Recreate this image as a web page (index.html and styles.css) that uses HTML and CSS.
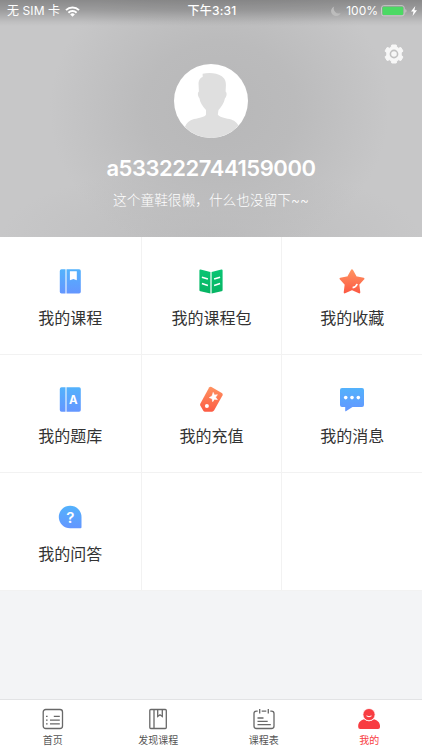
FILE: index.html
```html
<!DOCTYPE html>
<html lang="zh-CN">
<head>
    <meta charset="UTF-8">
    <meta name="viewport" content="width=device-width, initial-scale=1.0">
    <title>我的</title>
    <link rel="stylesheet" href="styles.css">
</head>
<body>
    <header class="profile">
        <div class="status-bar">
            <div class="status-left">
                <span>无 SIM 卡</span>
                <svg class="wifi" width="15" height="11" viewBox="0 0 15 11" fill="none" stroke="#fff" stroke-width="2">
                    <path d="M1 4.1a9.3 9.3 0 0 1 13 0M3.4 6.7a5.9 5.9 0 0 1 8.2 0"/>
                    <path d="M7.5 10.7L5.2 8.4a3.3 3.3 0 0 1 4.6 0z" fill="#fff" stroke="none"/>
                </svg>
            </div>
            <div class="status-time">下午3:31</div>
            <div class="status-right">
                <svg class="moon" width="10" height="10" viewBox="0 0 10 10">
                    <path d="M3.2 0.4A5 5 0 1 0 9.7 6.9 4.9 4.9 0 0 1 3.2 0.4z" fill="#bcbcbc"/>
                </svg>
                <span>100%</span>
                <svg class="battery" width="26" height="12" viewBox="0 0 26 12">
                    <rect x="0.5" y="0.7" width="22.7" height="10.2" rx="2.2" fill="none" stroke="#c9c9c9"/>
                    <rect x="1.5" y="1.7" width="20.7" height="8.2" rx="1.2" fill="#4cd964"/>
                    <path d="M24.3 4.1v3.6q1.2-.5 1.2-1.8t-1.2-1.8z" fill="#c9c9c9"/>
                </svg>
                <svg class="bolt" width="6" height="10" viewBox="0 0 6 10">
                    <path d="M4.3 0L0 5.5h2.5L1.6 10 6 4.2H3.4z" fill="#fff"/>
                </svg>
            </div>
        </div>
        <a class="settings" href="#">
            <svg width="20" height="20" viewBox="0 0 20 20">
                <path d="M7.8 1h4.4l.7 2.300 1.500.9 2.500-.7 2.100 3.600-1.800 1.800v2.200l1.800 1.800-2.100 3.600-2.500-.7-1.500.9-.7 2.300H7.800l-.7-2.300-1.500-.9-2.500.7L1 12.900l1.800-1.800V8.900L1 7.100l2.100-3.600 2.500.7 1.500-.9z" fill="#f7f7f7" stroke="#f7f7f7" stroke-linejoin="round"/>
                <circle cx="10" cy="10" r="3.6" fill="#f7f7f7" stroke="#c2c2c2" stroke-width="1.6"/>
            </svg>
        </a>
        <svg class="avatar" width="74" height="74" viewBox="0 0 74 74">
            <circle cx="37" cy="37" r="37" fill="#fff"/>
            <path d="M28.600 9.800c6.500-1.600 14.300-.8 18.800 2.200 3.600 2.700 4.600 5 4.500 9.500l-.3 6c1.500.8 1.300 5-.6 6.800-1 5-3.600 8.500-6.500 11.700l-.7 4.500c1 2.500 6.500 3.400 11.700 4.600 5 1.200 7.300 3.700 9 6.700A37 37 0 0 1 10.800 63c1.700-4 4.400-6.700 9.200-7.900 5.400-1.300 10.800-2 12-4.600V46c-2.900-3.200-5.800-6.700-6.600-11.700-1.800-1.800-2-6-.5-6.800l-.4-8.500c.3-2.500 1.300-4.400 2.900-5.500l1.300-.6z" fill="#dfdfdf"/>
        </svg>
        <h1 class="username">a533222744159000</h1>
        <p class="bio">这个童鞋很懒，什么也没留下~~</p>
    </header>

    <main class="menu">
        <a class="menu-item" href="#">
            <svg width="28" height="28" viewBox="0 0 28 28">
                <defs>
                    <linearGradient id="blue" x1="0" y1="0" x2="0" y2="1">
                        <stop offset="0" stop-color="#53b2fc"/>
                        <stop offset="1" stop-color="#6496ff"/>
                    </linearGradient>
                    <linearGradient id="orange" x1="0" y1="0" x2="0" y2="1">
                        <stop offset="0" stop-color="#ff9260"/>
                        <stop offset="1" stop-color="#fc5b44"/>
                    </linearGradient>
                    <linearGradient id="green" x1="0" y1="0" x2="0" y2="1">
                        <stop offset="0" stop-color="#0ac574"/>
                        <stop offset="1" stop-color="#06b463"/>
                    </linearGradient>
                </defs>
                <rect x="3.8" y="2.3" width="21" height="24.2" rx="1.7" fill="url(#blue)"/>
                <path d="M9.5 2v25h1V2z" fill="#fff"/>
                <path d="M13.9 4.300h6.900v9l-3.400-1.400-3.500 1.400z" fill="#fff"/>
            </svg>
            <span>我的课程</span>
        </a>
        <a class="menu-item" href="#">
            <svg width="28" height="28" viewBox="0 0 28 28">
                <path d="M2.400 3.600q0-1.200 1.200-1l9.800 2.300v21.700L3.500 24.300q-1.100-.3-1.100-1.400zM14.600 4.900l9.800-2.300q1.200-.2 1.200 1v19.300q0 1.100-1.100 1.400l-9.900 2.300z" fill="url(#green)"/>
                <path d="M4.900 10.200l6 1.800M4.900 16.600l6 1.800M23.100 10.200l-6 1.800M23.100 16.600l-6 1.800" stroke="#fff" stroke-width="1.600"/>
            </svg>
            <span>我的课程包</span>
        </a>
        <a class="menu-item" href="#">
            <svg width="28" height="28" viewBox="0 0 28 28">
                <path d="M14 3.300l3.900 7 7.600 1.400-5.200 5.700 1 8-7.300-3.200-7.300 3.200 1-8-5.200-5.700 7.600-1.400z" fill="url(#orange)" stroke="url(#orange)" stroke-width="2" stroke-linejoin="round"/>
                <path d="M14.600 20.600q3.600-.4 4.500-3.700" fill="none" stroke="#fff" stroke-width="1.700"/>
            </svg>
            <span>我的收藏</span>
        </a>
        <a class="menu-item" href="#">
            <svg width="28" height="28" viewBox="0 0 28 28">
                <rect x="3.800" y="2.300" width="21" height="24.400" rx="1.700" fill="url(#blue)"/>
                <path d="M9.5 2v25h1V2z" fill="#fff"/>
                <text class="icon-letter" x="17.4" y="18.6">A</text>
            </svg>
            <span>我的题库</span>
        </a>
        <a class="menu-item" href="#">
            <svg width="28" height="28" viewBox="0 0 28 28">
                <path d="M12.100 2.600q1-1.300 2.400-.5l10.300 5.900q1.500.9.700 2.400l-8.500 15.200q-.7 1.100-1.900 1.100H8q-1.100 0-1.700-1l-3-5.100q-.5-.9 0-1.900z" fill="url(#orange)"/>
                <circle cx="9.900" cy="21.100" r="2" fill="#fff"/>
                <path d="M16.200 7.400l1.200 2.700 3-.4-1.800 2.500 1.800 2.400-3-.4-1.700 2.500-.6-3-2.800-1.100 2.700-1.500z" fill="#fff" stroke="#fff" stroke-width=".6" stroke-linejoin="round"/>
            </svg>
            <span>我的充值</span>
        </a>
        <a class="menu-item" href="#">
            <svg width="28" height="28" viewBox="0 0 28 28">
                <path d="M4 3h20q2 0 2 2v15q0 2-2 2h-9.500l-6.600 4.200q-.7.300-.7-.5V22H4q-2 0-2-2V5q0-2 2-2z" fill="url(#blue)"/>
                <circle cx="7.700" cy="12.600" r="1.800" fill="#fff"/>
                <circle cx="14" cy="12.600" r="1.800" fill="#fff"/>
                <circle cx="20.300" cy="12.600" r="1.800" fill="#fff"/>
            </svg>
            <span>我的消息</span>
        </a>
        <a class="menu-item" href="#">
            <svg width="28" height="28" viewBox="0 0 28 28">
                <path d="M14.100 2.700A11.300 11.300 0 0 1 25.500 14v10.300q0 1-1 1H14.100a11.300 11.300 0 0 1 0-22.600z" fill="url(#blue)"/>
                <text class="icon-letter icon-question" x="14.3" y="19.9">?</text>
            </svg>
            <span>我的问答</span>
        </a>
        <div class="menu-item"></div>
        <div class="menu-item"></div>
    </main>

    <nav class="tab-bar">
        <a class="tab" href="#">
            <svg width="24" height="22" viewBox="0 0 24 22" fill="none" stroke="#686868" stroke-width="1.3">
                <rect x="2.2" y="1.5" width="19.3" height="19" rx="2.5"/>
                <path d="M12.800 8.400h6M9 12.200h9.800M9 15.900h9.800"/>
                <path d="M5 8.400h1.600M5 12.200h1.600M5 15.900h1.600"/>
            </svg>
            <span>首页</span>
        </a>
        <a class="tab" href="#">
            <svg width="24" height="22" viewBox="0 0 24 22" fill="none" stroke="#686868" stroke-width="1.3">
                <rect x="3.8" y="1.5" width="16.5" height="19" rx="1"/>
                <path d="M8 1.500v19M11.700 1.500v7l2.300-1.700 2.300 1.700v-7"/>
            </svg>
            <span>发现课程</span>
        </a>
        <a class="tab" href="#">
            <svg width="24" height="22" viewBox="0 0 24 22" fill="none" stroke="#686868" stroke-width="1.3">
                <path d="M5.700 3.100H4.500a2.500 2.500 0 0 0-2.500 2.500V18a2.500 2.500 0 0 0 2.500 2.500h15A2.500 2.500 0 0 0 22 18V5.600a2.500 2.500 0 0 0-2.500-2.500h-1.200M9.700 3.100h4.600"/>
                <path d="M7.700 1v4.400M16.300 1v4.400M5.500 10h6M5.500 13.400h10.200M5.500 16.700h13.300"/>
            </svg>
            <span>课程表</span>
        </a>
        <a class="tab active" href="#">
            <svg width="24" height="22" viewBox="0 0 24 22">
                <path d="M7 11.200q5 4 10 0c3.500 1 6 3.300 6 6.800v1q0 2-2 2H3.200q-2 0-2-2v-1c0-3.500 2.400-5.800 5.800-6.800z" fill="#f83c41"/>
                <circle cx="12" cy="6.600" r="6.100" fill="#f83c41" stroke="#fff" stroke-width=".8"/>
                <path d="M9.500 7.900q2.500 1.700 5 0" fill="none" stroke="#fff" stroke-width="1"/>
            </svg>
            <span>我的</span>
        </a>
    </nav>
</body>
</html>
```

FILE: styles.css
```css
* {
    box-sizing: border-box;
}
body {
    margin: 0;
    height: 750px;
    display: flex;
    flex-direction: column;
    overflow: hidden;
    font-family: Inter, "Noto Sans CJK SC", sans-serif;
    background-color: #f3f4f6;
}
a {
    color: inherit;
    text-decoration: none;
}
svg {
    display: block;
    flex-shrink: 0;
}
.profile {
    position: relative;
    height: 237px;
    flex-shrink: 0;
    display: flex;
    flex-direction: column;
    align-items: center;
    color: #fff;
    background:
        linear-gradient(rgba(0, 0, 0, 0.31), rgba(0, 0, 0, 0.22) 10px, rgba(0, 0, 0, 0.04) 22px, rgba(0, 0, 0, 0) 26px),
        radial-gradient(ellipse 170px 150px at 52% 46%, #b7b7b8, #bbbbbc 45%, rgba(187, 187, 188, 0)),
        radial-gradient(ellipse 210px 70px at 50% 100%, #bcbcbd, rgba(188, 188, 189, 0)),
        #c7c7c8;
}
.status-bar {
    width: 100%;
    height: 22px;
    padding: 0 5px 0 7px;
    display: grid;
    grid-template-columns: 1fr auto 1fr;
    align-items: center;
    font-size: 12px;
    line-height: 22px;
}
.status-left, .status-right {
    display: flex;
    align-items: center;
}
.status-left {
    gap: 5px;
    letter-spacing: 0.1px;
}
.status-time {
    font-weight: 500;
    letter-spacing: 0.2px;
}
.status-right {
    justify-content: flex-end;
}
.moon {
    margin-right: 5px;
}
.battery {
    margin: 0 4px 0 3px;
}
.settings {
    position: absolute;
    top: 44px;
    right: 18px;
}
.avatar {
    margin-top: 42px;
}
.username {
    margin: 16px 0 0;
    font-size: 22px;
    font-weight: 600;
    line-height: 28px;
    letter-spacing: -0.45px;
}
.bio {
    margin: 8px 0 0;
    font-size: 13.7px;
    line-height: 20px;
    font-weight: 300;
}
.menu {
    display: grid;
    grid-template-columns: repeat(3, 1fr);
    grid-auto-rows: 118px;
    height: 354px;
    flex-shrink: 0;
    background-color: #fff;
}
.menu-item {
    display: flex;
    flex-direction: column;
    align-items: center;
    padding-top: 30px;
    gap: 11px;
    border-left: 1px solid #f2f2f2;
    border-bottom: 1px solid #f2f2f2;
    color: #333;
    font-size: 16px;
    line-height: 24px;
}
.menu-item:nth-child(3n + 1) {
    border-left: none;
}
.icon-letter {
    fill: #fff;
    font-family: Inter, sans-serif;
    font-size: 11.5px;
    font-weight: 700;
    text-anchor: middle;
}
.icon-question {
    font-size: 15px;
    font-weight: 600;
}
.tab-bar {
    display: grid;
    grid-template-columns: repeat(4, 1fr);
    height: 51px;
    margin-top: auto;
    flex-shrink: 0;
    background-color: #fff;
    border-top: 1px solid #e2e3e5;
}
.tab {
    display: flex;
    flex-direction: column;
    align-items: center;
    padding-top: 8px;
    gap: 2px;
    color: #555;
    font-size: 10px;
    line-height: 16px;
}
.tab.active {
    color: #f83c41;
}
```
